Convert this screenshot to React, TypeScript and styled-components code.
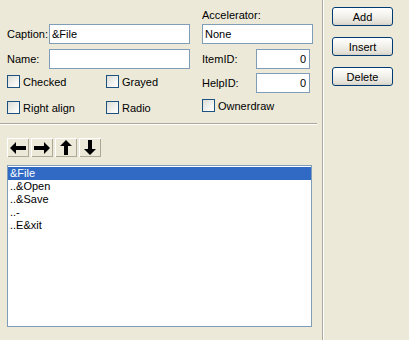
import styled, { createGlobalStyle } from "styled-components";

const GlobalStyle = createGlobalStyle`
  html, body {
    margin: 0;
    padding: 0;
    background: #ece9d8;
  }
  body {
    font-family: "Liberation Sans", Arial, sans-serif;
    font-size: 11px;
    color: #000;
  }
`;

export default function App() {
  const items = ["&File", "..&Open", "..&Save", "..-", "..E&xit"];
  return (
    <Dialog>
      <GlobalStyle />
      <LeftPane>
        <Form>
          <Spacer />
          <TopLabel>Accelerator:</TopLabel>

          <Label>Caption:</Label>
          <TextBox $width={141} defaultValue="&File" />
          <TextBox $col={4} $width={111} defaultValue="None" />

          <Label>Name:</Label>
          <TextBox $width={141} defaultValue="" />
          <SideLabel>ItemID:</SideLabel>
          <TextBox $width={54} $right defaultValue="0" />

          <CheckRow>
            <Check $width={99}>
              <Box />
              Checked
            </Check>
            <Check>
              <Box />
              Grayed
            </Check>
          </CheckRow>
          <SideLabel>HelpID:</SideLabel>
          <TextBox $width={54} $right defaultValue="0" />

          <CheckRow>
            <Check $width={99}>
              <Box />
              Right align
            </Check>
            <Check>
              <Box />
              Radio
            </Check>
          </CheckRow>
          <OwnerCell>
            <Check>
              <Box />
              Ownerdraw
            </Check>
          </OwnerCell>
        </Form>

        <Groove />

        <ArrowBar>
          <ArrowButton>
            <svg width="16" height="12" viewBox="0 0 16 12">
              <polygon points="0,6 6,0 6,4 16,4 16,8 6,8 6,12" fill="#000" />
            </svg>
          </ArrowButton>
          <ArrowButton>
            <svg width="16" height="12" viewBox="0 0 16 12">
              <polygon points="16,6 10,0 10,4 0,4 0,8 10,8 10,12" fill="#000" />
            </svg>
          </ArrowButton>
          <ArrowButton>
            <svg width="12" height="15" viewBox="0 0 12 15">
              <polygon points="6,0 12,6 8,6 8,15 4,15 4,6 0,6" fill="#000" />
            </svg>
          </ArrowButton>
          <ArrowButton>
            <svg width="12" height="15" viewBox="0 0 12 15">
              <polygon points="6,15 12,9 8,9 8,0 4,0 4,9 0,9" fill="#000" />
            </svg>
          </ArrowButton>
        </ArrowBar>

        <ListBox>
          {items.map((item, i) => (
            <ListItem key={item} $selected={i === 0}>
              {item}
            </ListItem>
          ))}
        </ListBox>
      </LeftPane>

      <RightPane>
        <PushButton>Add</PushButton>
        <PushButton>Insert</PushButton>
        <PushButton>Delete</PushButton>
      </RightPane>
    </Dialog>
  );
}

const Dialog = styled.div`
  width: 409px;
  height: 340px;
  display: flex;
  background: #ece9d8;
  overflow: hidden;
`;

const LeftPane = styled.div`
  width: 322px;
  flex: none;
  border-right: 1px solid #aca899;
  display: flex;
  flex-direction: column;
`;

const RightPane = styled.div`
  flex: 1;
  border-left: 1px solid #fff;
  padding: 7px 0 0 8px;
  display: flex;
  flex-direction: column;
  gap: 11px;
`;

const Form = styled.div`
  display: grid;
  grid-template-columns: 42px 141px 12px 54px 57px;
  grid-template-rows: 24px 25px 24px 26px 13px;
  align-items: start;
  padding: 0 0 0 7px;
`;

const Spacer = styled.div`
  grid-column: 1 / span 3;
`;

const TopLabel = styled.div`
  grid-column: 4 / span 2;
  align-self: end;
  line-height: 13px;
  padding-bottom: 2px;
`;

const Label = styled.div`
  grid-column: 1;
  height: 20px;
  line-height: 20px;
`;

const SideLabel = styled.div`
  grid-column: 4;
  height: 20px;
  line-height: 20px;
`;

const TextBox = styled.input<{ $width: number; $col?: number; $right?: boolean }>`
  ${(p) => (p.$col ? `grid-column: ${p.$col} / span 2;` : "")}
  width: ${(p) => p.$width}px;
  height: 20px;
  box-sizing: border-box;
  border: 1px solid #7f9db9;
  background: #fff;
  padding: 0 3px 0 2px;
  margin: 0;
  font-family: "Liberation Sans", Arial, sans-serif;
  font-size: 11px;
  color: #000;
  text-align: ${(p) => (p.$right ? "right" : "left")};
  outline: none;
`;

const CheckRow = styled.div`
  grid-column: 1 / span 3;
  display: flex;
  align-items: center;
  height: 13px;
  margin-top: 2px;
`;

const OwnerCell = styled.div`
  grid-column: 4 / span 2;
  display: flex;
  align-items: center;
  height: 13px;
`;

const Check = styled.label<{ $width?: number }>`
  display: flex;
  align-items: center;
  gap: 3px;
  height: 13px;
  ${(p) => (p.$width ? `width: ${p.$width}px;` : "")}
  white-space: nowrap;
`;

const Box = styled.span`
  width: 13px;
  height: 13px;
  box-sizing: border-box;
  border: 1px solid #1c5180;
  background: linear-gradient(135deg, #dcdcd7 0%, #f6f6f4 70%, #ffffff 100%);
  flex: none;
`;

const Groove = styled.div`
  width: 317px;
  margin-top: 11px;
  border-top: 1px solid #aca899;
  border-bottom: 1px solid #fff;
`;

const ArrowBar = styled.div`
  display: flex;
  gap: 2px;
  margin: 13px 0 0 7px;
`;

const ArrowButton = styled.button`
  width: 22px;
  height: 19px;
  padding: 0;
  border: none;
  background: #ece9d8;
  box-shadow: inset 1px 1px #fff, inset -1px -1px #aca899;
  display: flex;
  align-items: center;
  justify-content: center;
`;

const ListBox = styled.div`
  width: 305px;
  height: 162px;
  box-sizing: border-box;
  margin: 8px 0 0 7px;
  border: 1px solid #7f9db9;
  background: #fff;
  padding-top: 1px;
`;

const ListItem = styled.div<{ $selected?: boolean }>`
  height: 13px;
  line-height: 13px;
  padding-left: 2px;
  background: ${(p) => (p.$selected ? "#316ac5" : "transparent")};
  color: ${(p) => (p.$selected ? "#fff" : "#000")};
`;

const PushButton = styled.button`
  width: 61px;
  height: 19px;
  padding: 0;
  border: 1px solid #003c74;
  border-radius: 3px;
  background: linear-gradient(#ffffff 0%, #f4f3ee 40%, #e3e1d8 85%, #d6d0c5 100%);
  font-family: "Liberation Sans", Arial, sans-serif;
  font-size: 11px;
  color: #000;
`;
